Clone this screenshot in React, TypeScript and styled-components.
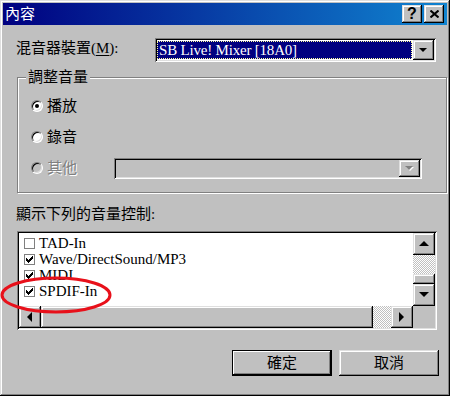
import styled, { createGlobalStyle, css } from 'styled-components';

const GlobalStyle = createGlobalStyle`
    html, body {
        margin: 0;
        padding: 0;
        background: #c0c0c0;
    }
    * {
        box-sizing: border-box;
    }
`;

const FONT = `"Liberation Serif", "Noto Sans CJK TC", serif`;

const raised = css`
    background: #c0c0c0;
    box-shadow: inset -1px -1px #000, inset 1px 1px #dfdfdf, inset -2px -2px #808080, inset 2px 2px #fff;
`;

const sunken = css`
    box-shadow: inset 1px 1px #808080, inset -1px -1px #fff, inset 2px 2px #000, inset -2px -2px #dfdfdf;
`;

const dither = css`
    background: repeating-conic-gradient(#c0c0c0 0 25%, #fff 0 50%) 0 0 / 2px 2px;
`;

const Window = styled.div`
    position: relative;
    width: 450px;
    height: 396px;
    padding: 3px;
    display: flex;
    flex-direction: column;
    background: #c0c0c0;
    font-family: ${FONT};
    font-size: 15px;
    line-height: 16px;
    color: #000;
    box-shadow: inset -1px -1px #000, inset 1px 1px #dfdfdf, inset -2px -2px #808080, inset 2px 2px #fff;
`;

const TitleBar = styled.div`
    height: 22px;
    display: flex;
    align-items: center;
    padding: 0 3px 0 2px;
    background: linear-gradient(to right, #000080, #1084d0);
    color: #fff;

    .title__text {
        flex: 1;
        font-size: 15px;
    }
`;

const TitleButton = styled.div`
    ${raised};
    width: 20px;
    height: 18px;
    display: flex;
    align-items: center;
    justify-content: center;
    color: #000;
    font-family: "Liberation Sans", sans-serif;
    font-weight: 700;
    font-size: 16px;

    & + & {
        margin-left: 2px;
    }
`;

const MixerRow = styled.div`
    margin-top: 13px;
    height: 24px;
    padding: 0 11px 0 13px;
    display: flex;
    align-items: center;
    justify-content: space-between;

    .row__label {
        margin-top: -4px;
    }
    u {
        text-underline-offset: 2px;
    }
`;

const Combo = styled.div<{ $disabled?: boolean }>`
    ${sunken};
    width: ${(p) => (p.$disabled ? 308 : 281)}px;
    height: ${(p) => (p.$disabled ? 21 : 24)}px;
    padding: 2px;
    display: flex;
    align-items: stretch;
    background: ${(p) => (p.$disabled ? '#c0c0c0' : '#fff')};

    .combo__empty {
        flex: 1;
    }
`;

const ComboValue = styled.div`
    flex: 1;
    margin: 1px 1px 1px 0;
    padding-left: 1px;
    background: #000080;
    color: #fff;
    border: 1px dotted #ffffa0;
    display: flex;
    align-items: center;
    white-space: nowrap;
    letter-spacing: -0.2px;
`;

const ArrowButton = styled.div<{ $w?: number }>`
    ${raised};
    width: ${(p) => p.$w ?? 22}px;
    display: flex;
    align-items: center;
    justify-content: center;
    flex-shrink: 0;
`;

const GroupBox = styled.div`
    position: relative;
    margin: 15px 0 0 14px;
    width: 430px;
    height: 116px;
    border: 1px solid #808080;
    box-shadow: inset 1px 1px #fff, 1px 1px #fff;
    padding: 18px 24px 0 13px;
    display: flex;
    flex-direction: column;
    gap: 11px;
`;

const Legend = styled.div`
    position: absolute;
    left: 8px;
    top: -9px;
    padding: 0 2px;
    background: #c0c0c0;
`;

const RadioRow = styled.div<{ $disabled?: boolean }>`
    height: 20px;
    display: flex;
    align-items: center;
    color: ${(p) => (p.$disabled ? '#808080' : '#000')};
    text-shadow: ${(p) => (p.$disabled ? '1px 1px #fff' : 'none')};

    .radio__text {
        margin-left: 4px;
    }
    .radio__push {
        margin-left: auto;
    }
`;

const RadioDot = styled.span<{ $checked?: boolean; $disabled?: boolean }>`
    width: 12px;
    height: 12px;
    border-radius: 50%;
    flex-shrink: 0;
    background: ${(p) => (p.$disabled ? '#c0c0c0' : '#fff')};
    border: 1px solid;
    border-color: #808080 #fff #fff #808080;
    box-shadow: inset 1px 1px #000, inset -1px -1px #dfdfdf;
    display: flex;
    align-items: center;
    justify-content: center;

    &::after {
        content: '';
        width: 4px;
        height: 4px;
        border-radius: 50%;
        background: #000;
        display: ${(p) => (p.$checked ? 'block' : 'none')};
    }
`;

const SectionLabel = styled.div`
    margin-top: 13px;
    padding-left: 13px;
    height: 16px;
`;

const ListBox = styled.div`
    ${sunken};
    margin: 9px 0 0 14px;
    width: 420px;
    height: 99px;
    padding: 2px;
    background: #fff;
    display: grid;
    grid-template-columns: 1fr 22px;
    grid-template-rows: 1fr 22px;
`;

const Items = styled.div`
    padding: 2px 0 0 5px;
    overflow: hidden;
`;

const Item = styled.div`
    height: 16px;
    display: flex;
    align-items: center;
    white-space: nowrap;

    .item__text {
        margin-left: 4px;
    }
`;

const Check = styled.span`
    width: 11px;
    height: 11px;
    border: 1px solid #808080;
    background: #fff;
    flex-shrink: 0;
    display: flex;
    align-items: center;
    justify-content: center;
`;

const VScroll = styled.div`
    display: flex;
    flex-direction: column;

    .scroll__track {
        flex: 1;
        ${dither};
    }
    .scroll__thumb {
        ${raised};
        height: 10px;
    }
    ${ArrowButton} {
        width: 22px;
        height: 22px;
    }
`;

const HScroll = styled.div`
    display: flex;

    .scroll__thumb {
        ${raised};
        width: 332px;
    }
    .scroll__track {
        flex: 1;
        ${dither};
    }
`;

const Corner = styled.div`
    background: #c0c0c0;
`;

const ButtonRow = styled.div`
    margin-top: 20px;
    padding-right: 8px;
    display: flex;
    justify-content: flex-end;
    gap: 7px;
`;

const PushButton = styled.button<{ $default?: boolean }>`
    ${raised};
    width: 100px;
    height: 26px;
    border: 0;
    padding: 0;
    font: inherit;
    color: #000;
    ${(p) =>
        p.$default &&
        css`
            box-shadow: inset 0 0 0 1px #000, inset -2px -2px #000, inset 2px 2px #fff, inset -3px -3px #808080;
        `}
`;

const Mark = styled.svg`
    position: absolute;
    left: 0;
    top: 275px;
    pointer-events: none;
`;

type Dir = 'up' | 'down' | 'left' | 'right';

// solid arrow glyph; s = base length in px
const Triangle = ({ dir, s = 9, color = '#000', shadow }: { dir: Dir; s?: number; color?: string; shadow?: boolean }) => {
    const h = Math.ceil(s / 2);
    const vertical = dir === 'up' || dir === 'down';
    const pts = {
        up: `0,${h} ${s},${h} ${s / 2},0`,
        down: `0,0 ${s},0 ${s / 2},${h}`,
        left: `${h},0 ${h},${s} 0,${s / 2}`,
        right: `0,0 0,${s} ${h},${s / 2}`,
    }[dir];
    const w = vertical ? s : h;
    const ht = vertical ? h : s;
    return (
        <svg width={w + 1} height={ht + 1} viewBox={`0 0 ${w + 1} ${ht + 1}`}>
            {shadow && <polygon points={pts} fill="#fff" transform="translate(1 1)" />}
            <polygon points={pts} fill={color} />
        </svg>
    );
};

const CheckMark = () => (
    <svg width="7" height="7" viewBox="0 0 7 7" shapeRendering="crispEdges">
        <path
            d="M6 0h1v3h-1zM5 1h1v3h-1zM4 2h1v3h-1zM0 2h1v3h-1zM1 3h1v3h-1zM2 4h1v3h-1zM3 3h1v3h-1z"
            fill="#000"
        />
    </svg>
);

const controls = [
    { name: 'TAD-In', checked: false },
    { name: 'Wave/DirectSound/MP3', checked: true },
    { name: 'MIDI', checked: true },
    { name: 'SPDIF-In', checked: true },
];

export default function App() {
    return (
        <>
            <GlobalStyle />
            <Window>
                <TitleBar>
                    <span className="title__text">內容</span>
                    <TitleButton>?</TitleButton>
                    <TitleButton>
                        <svg width="9" height="8" viewBox="0 0 9 8">
                            <path d="M0.5 0.5 L8.5 7.5 M8.5 0.5 L0.5 7.5" stroke="#000" strokeWidth="2" />
                        </svg>
                    </TitleButton>
                </TitleBar>

                <MixerRow>
                    <span className="row__label">
                        混音器裝置(<u>M</u>):
                    </span>
                    <Combo>
                        <ComboValue>SB Live! Mixer [18A0]</ComboValue>
                        <ArrowButton $w={21}>
                            <Triangle dir="down" s={8} />
                        </ArrowButton>
                    </Combo>
                </MixerRow>

                <GroupBox>
                    <Legend>調整音量</Legend>
                    <RadioRow>
                        <RadioDot $checked />
                        <span className="radio__text">播放</span>
                    </RadioRow>
                    <RadioRow>
                        <RadioDot />
                        <span className="radio__text">錄音</span>
                    </RadioRow>
                    <RadioRow $disabled>
                        <RadioDot $disabled />
                        <span className="radio__text">其他</span>
                        <Combo $disabled className="radio__push">
                            <div className="combo__empty" />
                            <ArrowButton $w={21}>
                                <Triangle dir="down" s={8} color="#808080" shadow />
                            </ArrowButton>
                        </Combo>
                    </RadioRow>
                </GroupBox>

                <SectionLabel>顯示下列的音量控制:</SectionLabel>

                <ListBox>
                    <Items>
                        {controls.map((c) => (
                            <Item key={c.name}>
                                <Check>{c.checked && <CheckMark />}</Check>
                                <span className="item__text">{c.name}</span>
                            </Item>
                        ))}
                    </Items>
                    <VScroll>
                        <ArrowButton>
                            <Triangle dir="up" s={10} />
                        </ArrowButton>
                        <div className="scroll__track" />
                        <div className="scroll__thumb" />
                        <ArrowButton>
                            <Triangle dir="down" s={10} />
                        </ArrowButton>
                    </VScroll>
                    <HScroll>
                        <ArrowButton>
                            <Triangle dir="left" s={10} />
                        </ArrowButton>
                        <div className="scroll__thumb" />
                        <div className="scroll__track" />
                        <ArrowButton>
                            <Triangle dir="right" s={10} />
                        </ArrowButton>
                    </HScroll>
                    <Corner />
                </ListBox>

                <ButtonRow>
                    <PushButton $default>確定</PushButton>
                    <PushButton>取消</PushButton>
                </ButtonRow>

                <Mark width="116" height="42" viewBox="0 0 116 42">
                    <ellipse cx="56" cy="20" rx="54" ry="17" fill="none" stroke="#e8101a" strokeWidth="3" />
                </Mark>
            </Window>
        </>
    );
}
